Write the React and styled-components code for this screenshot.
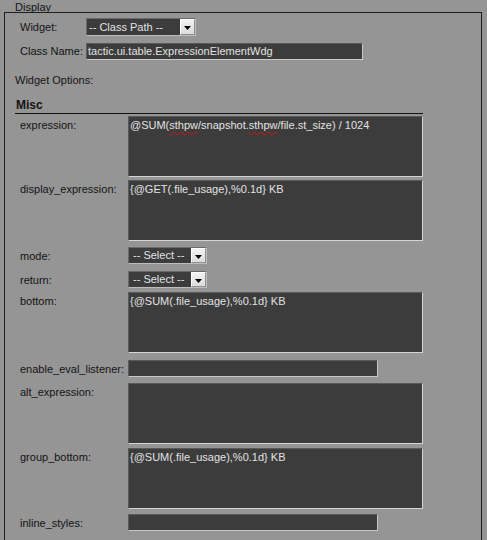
import React from "react";
import styled, { createGlobalStyle } from "styled-components";

const Global = createGlobalStyle`
  html, body { margin: 0; padding: 0; }
  body {
    background: #959595;
    font-family: "Liberation Sans", Arial, sans-serif;
    font-size: 11px;
    color: #141414;
  }
`;

const Page = styled.div`
  width: 487px;
  height: 540px;
  overflow: hidden;
`;

const Legend = styled.div`
  height: 12px;
  padding: 1px 0 0 15px;
  box-sizing: border-box;
  line-height: 13px;
  font-size: 11px;
  color: #141414;
  position: relative;
  z-index: 1;
`;

const Frame = styled.div`
  margin-left: 4px;
  width: 478px;
  height: 600px;
  box-sizing: border-box;
  border: 1px solid #1e1e1e;
  padding: 5px 0 0 0;
`;

const TopGrid = styled.div`
  display: grid;
  grid-template-columns: 66px auto;
  row-gap: 7px;
  padding-left: 15px;
  align-items: center;
  justify-items: start;
`;

const Label = styled.div`
  font-size: 11px;
  line-height: 13px;
  color: #141414;
  white-space: nowrap;
`;

const OptLabel = styled(Label)`
  padding-top: 3px;
`;

const SelectBox = styled.div`
  display: flex;
  width: ${(p) => p.$w}px;
  height: ${(p) => p.$h}px;
  box-sizing: border-box;
  border-top: 1px solid #6a6a6a;
  border-left: 1px solid #6a6a6a;
  border-right: 1px solid #bdbdbd;
  border-bottom: 1px solid #bdbdbd;
  background: #3c3c3c;
`;

const SelectText = styled.div`
  flex: 1;
  color: #e2e2e2;
  font-size: 11px;
  line-height: ${(p) => p.$h - 2}px;
  padding-left: ${(p) => p.$pad}px;
  white-space: nowrap;
  overflow: hidden;
`;

const ArrowButton = styled.div`
  width: 15px;
  box-sizing: border-box;
  background: linear-gradient(#f2f2f2, #dcdcdc);
  border-top: 1px solid #ffffff;
  border-left: 1px solid #ffffff;
  border-right: 1px solid #8c8c8c;
  border-bottom: 1px solid #8c8c8c;
  display: flex;
  align-items: center;
  justify-content: center;
  padding-top: 2px;
`;

const TextInput = styled.div`
  width: ${(p) => p.$w}px;
  height: ${(p) => p.$h}px;
  box-sizing: border-box;
  background: #3c3c3c;
  border-top: 1px solid #5a5a5a;
  border-left: 1px solid #5a5a5a;
  border-right: 1px solid #c8c8c8;
  border-bottom: 1px solid #c8c8c8;
  color: #e2e2e2;
  font-size: 11px;
  line-height: ${(p) => p.$h - 2}px;
  padding-left: 1px;
  white-space: nowrap;
  overflow: hidden;
`;

const TextArea = styled.div`
  width: 295px;
  height: ${(p) => p.$h}px;
  box-sizing: border-box;
  background: #3c3c3c;
  border-top: 1px solid #5a5a5a;
  border-left: 1px solid #5a5a5a;
  border-right: 1px solid #d4d4d4;
  border-bottom: 1px solid #d4d4d4;
  color: #e2e2e2;
  font-size: 11px;
  line-height: 13px;
  padding: 2px 1px;
  white-space: pre;
  overflow: hidden;
`;

const Misspelled = styled.span`
  text-decoration: underline wavy #e01010;
  text-decoration-thickness: 1px;
  text-underline-offset: 2px;
`;

const SectionNote = styled.div`
  margin: 14px 0 0 10px;
  line-height: 13px;
  font-size: 11px;
  color: #141414;
`;

const SectionTitle = styled.div`
  margin: 11px 0 0 10px;
  width: 408px;
  box-sizing: border-box;
  padding: 0 0 1px 1px;
  border-bottom: 1px solid #111;
  font-size: 12px;
  font-weight: bold;
  line-height: 14px;
  color: #141414;
`;

const Options = styled.div`
  padding: 0 0 0 15px;
`;

const OptionRow = styled.div`
  display: grid;
  grid-template-columns: 108px auto;
  align-items: start;
  margin-top: ${(p) => p.$gap}px;
`;

function Arrow() {
  return (
    <svg width="7" height="4" viewBox="0 0 7 4">
      <path d="M0 0 H7 L3.5 4 Z" fill="#000" />
    </svg>
  );
}

function Select({ text, w, h, pad }) {
  return (
    <SelectBox $w={w} $h={h}>
      <SelectText $h={h} $pad={pad}>{text}</SelectText>
      <ArrowButton>
        <Arrow />
      </ArrowButton>
    </SelectBox>
  );
}

const rows = [
  { label: "expression:", gap: 2, kind: "area", h: 61, value: "expr" },
  { label: "display_expression:", gap: 3, kind: "area", h: 61, value: "{@GET(.file_usage),%0.1d} KB" },
  { label: "mode:", gap: 6, kind: "select" },
  { label: "return:", gap: 7, kind: "select" },
  { label: "bottom:", gap: 4, kind: "area", h: 61, value: "{@SUM(.file_usage),%0.1d} KB" },
  { label: "enable_eval_listener:", gap: 7, kind: "input" },
  { label: "alt_expression:", gap: 6, kind: "area", h: 61, value: "" },
  { label: "group_bottom:", gap: 4, kind: "area", h: 61, value: "{@SUM(.file_usage),%0.1d} KB" },
  { label: "inline_styles:", gap: 5, kind: "input" },
];

function Field({ row }) {
  if (row.kind === "select") return <Select text="-- Select --" w={79} h={17} pad={4} />;
  if (row.kind === "input") return <TextInput $w={250} $h={17} />;
  if (row.value === "expr") {
    return (
      <TextArea $h={row.h}>
        @SUM(<Misspelled>sthpw</Misspelled>/snapshot.<Misspelled>sthpw</Misspelled>/file.st_size) / 1024
      </TextArea>
    );
  }
  return <TextArea $h={row.h}>{row.value}</TextArea>;
}

export default function App() {
  return (
    <Page>
      <Global />
      <Legend>Display</Legend>
      <Frame>
        <TopGrid>
          <Label>Widget:</Label>
          <Select text="-- Class Path --" w={110} h={18} pad={2} />
          <Label>Class Name:</Label>
          <TextInput $w={277} $h={17}>tactic.ui.table.ExpressionElementWdg</TextInput>
        </TopGrid>
        <SectionNote>Widget Options:</SectionNote>
        <SectionTitle>Misc</SectionTitle>
        <Options>
          {rows.map((r) => (
            <OptionRow key={r.label} $gap={r.gap}>
              <OptLabel>{r.label}</OptLabel>
              <Field row={r} />
            </OptionRow>
          ))}
        </Options>
      </Frame>
    </Page>
  );
}
